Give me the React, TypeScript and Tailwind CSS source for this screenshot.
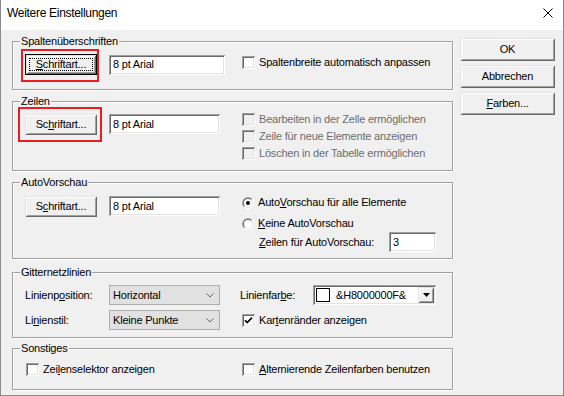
import type { ReactNode } from "react";

const raised =
  "shadow-[inset_1px_1px_0_#e3e3e3,inset_-1px_-1px_0_#696969,inset_2px_2px_0_#ffffff,inset_-2px_-2px_0_#a0a0a0]";
const sunken =
  "shadow-[inset_1px_1px_0_#a0a0a0,inset_-1px_-1px_0_#ffffff,inset_2px_2px_0_#696969,inset_-2px_-2px_0_#e3e3e3]";

function U({ children }: { children: ReactNode }) {
  return <span className="underline decoration-1 underline-offset-[1px]">{children}</span>;
}

function Btn({
  children,
  className = "",
  focused = false,
}: {
  children: ReactNode;
  className?: string;
  focused?: boolean;
}) {
  if (focused) {
    return (
      <button className={`flex border border-black bg-[#f0f0f0] ${className}`}>
        <span className={`flex flex-1 p-[3px] ${raised}`}>
          <span className="flex flex-1 items-center justify-center border border-dotted border-black">
            {children}
          </span>
        </span>
      </button>
    );
  }
  return (
    <button className={`flex items-center justify-center bg-[#f0f0f0] ${raised} ${className}`}>
      {children}
    </button>
  );
}

function TextBox({ value, className = "" }: { value: string; className?: string }) {
  return (
    <div className={`flex h-[20px] items-center bg-white pl-[4px] ${sunken} ${className}`}>{value}</div>
  );
}

function Check({
  children,
  checked = false,
  disabled = false,
  className = "",
}: {
  children: ReactNode;
  checked?: boolean;
  disabled?: boolean;
  className?: string;
}) {
  return (
    <label className={`flex items-center gap-[4px] ${disabled ? "text-[#6d6d6d]" : ""} ${className}`}>
      <span
        className={`flex size-[13px] shrink-0 items-center justify-center ${sunken} ${
          disabled ? "bg-[#f0f0f0]" : "bg-white"
        }`}
      >
        {checked && (
          <svg width="13" height="13" viewBox="0 0 13 13">
            <path d="M3 6.2 L5.2 8.6 L10 3.6" fill="none" stroke="#000" strokeWidth="1.7" />
          </svg>
        )}
      </span>
      <span>{children}</span>
    </label>
  );
}

function Radio({ children, checked = false }: { children: ReactNode; checked?: boolean }) {
  return (
    <label className="flex items-center gap-[4px]">
      <span className="flex size-[12px] shrink-0 items-center justify-center rounded-full border border-b-white border-l-[#a0a0a0] border-r-white border-t-[#a0a0a0]">
        <span className="flex size-[10px] items-center justify-center rounded-full border border-b-[#e3e3e3] border-l-[#696969] border-r-[#e3e3e3] border-t-[#696969] bg-white">
          {checked && <span className="size-[4px] rounded-full bg-black" />}
        </span>
      </span>
      <span>{children}</span>
    </label>
  );
}

function Select({ value }: { value: string }) {
  return (
    <div className="flex h-[20px] w-[111px] items-center justify-between border border-[#adadad] bg-[#e1e1e1] pl-[3px] pr-[5px]">
      <span>{value}</span>
      <svg width="8" height="5" viewBox="0 0 8 5">
        <polyline points="0.5,0.5 4,4 7.5,0.5" fill="none" stroke="#6a6a6a" strokeWidth="1" />
      </svg>
    </div>
  );
}

function Group({
  title,
  children,
  className = "",
}: {
  title: string;
  children: ReactNode;
  className?: string;
}) {
  return (
    <fieldset
      className={`w-[441px] border border-[#a0a0a0] shadow-[1px_1px_0_#ffffff,inset_1px_1px_0_#ffffff] ${className}`}
    >
      <legend className="ml-[7px] bg-[#f0f0f0] px-[1px] leading-[12px]">{title}</legend>
      {children}
    </fieldset>
  );
}

function RedMark({ className }: { className: string }) {
  return <span className={`pointer-events-none absolute border-2 border-[#ed1c24] ${className}`} />;
}

export default function App() {
  return (
    <div className="flex h-[396px] w-[564px] flex-col overflow-hidden border-x border-b border-[#8a8a8a] bg-[#f0f0f0] font-['Liberation_Sans',Arial,sans-serif] text-[11px] leading-[13px] tracking-[-0.2px] text-black">
      <div className="flex h-[30px] shrink-0 items-start bg-white pl-[6px] pr-[10px] pt-[6px]">
        <span className="text-[12px] leading-[14px] tracking-[-0.3px]">Weitere Einstellungen</span>
        <svg className="ml-auto mt-[2px]" width="10" height="10" viewBox="0 0 10 10">
          <path d="M0.5 0.5 L9.5 9.5 M9.5 0.5 L0.5 9.5" stroke="#000" strokeWidth="1" />
        </svg>
      </div>

      <div className="flex">
        <div className="flex w-[452px] flex-col pl-[11px] pt-[5px]">
          <Group title="Spaltenüberschriften">
            <div className="flex items-center pb-[14px] pl-[12px] pt-[7px]">
              <div className="relative">
                <RedMark className="-bottom-[7px] -left-[4px] -right-[2px] -top-[5px]" />
                <Btn focused className="h-[21px] w-[72px]">
                  <U>S</U>chriftart...
                </Btn>
              </div>
              <TextBox value="8 pt Arial" className="ml-[12px] w-[116px]" />
              <Check className="mb-[4px] ml-[17px]">Spaltenbreite automatisch anpassen</Check>
            </div>
          </Group>

          <Group title="Zeilen" className="mt-[5px]">
            <div className="flex items-start pb-[8px] pl-[12px]">
              <div className="relative mt-[7px]">
                <RedMark className="-bottom-[7px] -left-[7px] -right-[5px] -top-[7px]" />
                <Btn className="h-[21px] w-[72px]">
                  Sc<U>h</U>riftart...
                </Btn>
              </div>
              <TextBox value="8 pt Arial" className="ml-[12px] mt-[7px] w-[111px]" />
              <div className="ml-[22px] mt-[4px] flex flex-col">
                <Check disabled className="h-[17px]">
                  Bearbeiten in der Zelle ermöglichen
                </Check>
                <Check disabled className="h-[17px]">
                  Zeile für neue Elemente anzeigen
                </Check>
                <Check disabled className="h-[17px]">
                  Löschen in der Tabelle ermöglichen
                </Check>
              </div>
            </div>
          </Group>

          <Group title="AutoVorschau" className="mt-[5px]">
            <div className="flex items-start pb-[6px] pl-[12px]">
              <Btn className="mt-[8px] h-[21px] w-[72px]">
                S<U>c</U>hriftart...
              </Btn>
              <TextBox value="8 pt Arial" className="ml-[12px] mt-[8px] w-[111px]" />
              <div className="ml-[22px] mt-[6px] flex w-[194px] flex-col">
                <div className="flex h-[17px] items-center">
                  <Radio checked>
                    Auto<U>V</U>orschau für alle Elemente
                  </Radio>
                </div>
                <div className="mt-[4px] flex h-[17px] items-center">
                  <Radio>
                    <U>K</U>eine AutoVorschau
                  </Radio>
                </div>
                <div className="flex h-[20px] items-center pl-[17px]">
                  <span>
                    <U>Z</U>eilen für AutoVorschau:
                  </span>
                  <TextBox value="3" className="ml-auto w-[47px]" />
                </div>
              </div>
            </div>
          </Group>

          <Group title="Gitternetzlinien" className="mt-[7px]">
            <div className="flex flex-col pb-[7px] pl-[12px] pt-[7px]">
              <div className="flex h-[20px] items-center">
                <span className="w-[84px]">
                  Linienp<U>o</U>sition:
                </span>
                <Select value="Horizontal" />
                <span className="ml-[20px] w-[73px]">
                  Linienfar<U>b</U>e:
                </span>
                <div className={`flex h-[20px] w-[123px] items-center bg-white p-[2px] ${sunken}`}>
                  <span className="ml-[1px] size-[14px] border border-black bg-white" />
                  <span className="ml-[6px] flex-1">&amp;H8000000F&amp;</span>
                  <span className={`flex h-[16px] w-[16px] items-center justify-center bg-[#f0f0f0] ${raised}`}>
                    <svg width="7" height="4" viewBox="0 0 7 4">
                      <polygon points="0,0 7,0 3.5,4" fill="#000" />
                    </svg>
                  </span>
                </div>
              </div>
              <div className="mt-[5px] flex h-[20px] items-center">
                <span className="w-[84px]">
                  Li<U>n</U>ienstil:
                </span>
                <Select value="Kleine Punkte" />
                <Check checked className="ml-[22px]">
                  Kar<U>t</U>enränder anzeigen
                </Check>
              </div>
            </div>
          </Group>

          <Group title="Sonstiges" className="mt-[4px]">
            <div className="flex h-[16px] items-center pl-[13px] mt-[7px] mb-[12px]">
              <Check className="w-[216px]">
                Zei<U>l</U>enselektor anzeigen
              </Check>
              <Check>
                <U>A</U>lternierende Zeilenfarben benutzen
              </Check>
            </div>
          </Group>
        </div>

        <div className="ml-[7px] flex flex-col gap-[4px] pt-[8px]">
          <Btn className="h-[23px] w-[95px]">OK</Btn>
          <Btn className="h-[23px] w-[95px]">Abbrechen</Btn>
          <Btn className="h-[23px] w-[95px]">
            <U>F</U>arben...
          </Btn>
        </div>
      </div>
    </div>
  );
}
